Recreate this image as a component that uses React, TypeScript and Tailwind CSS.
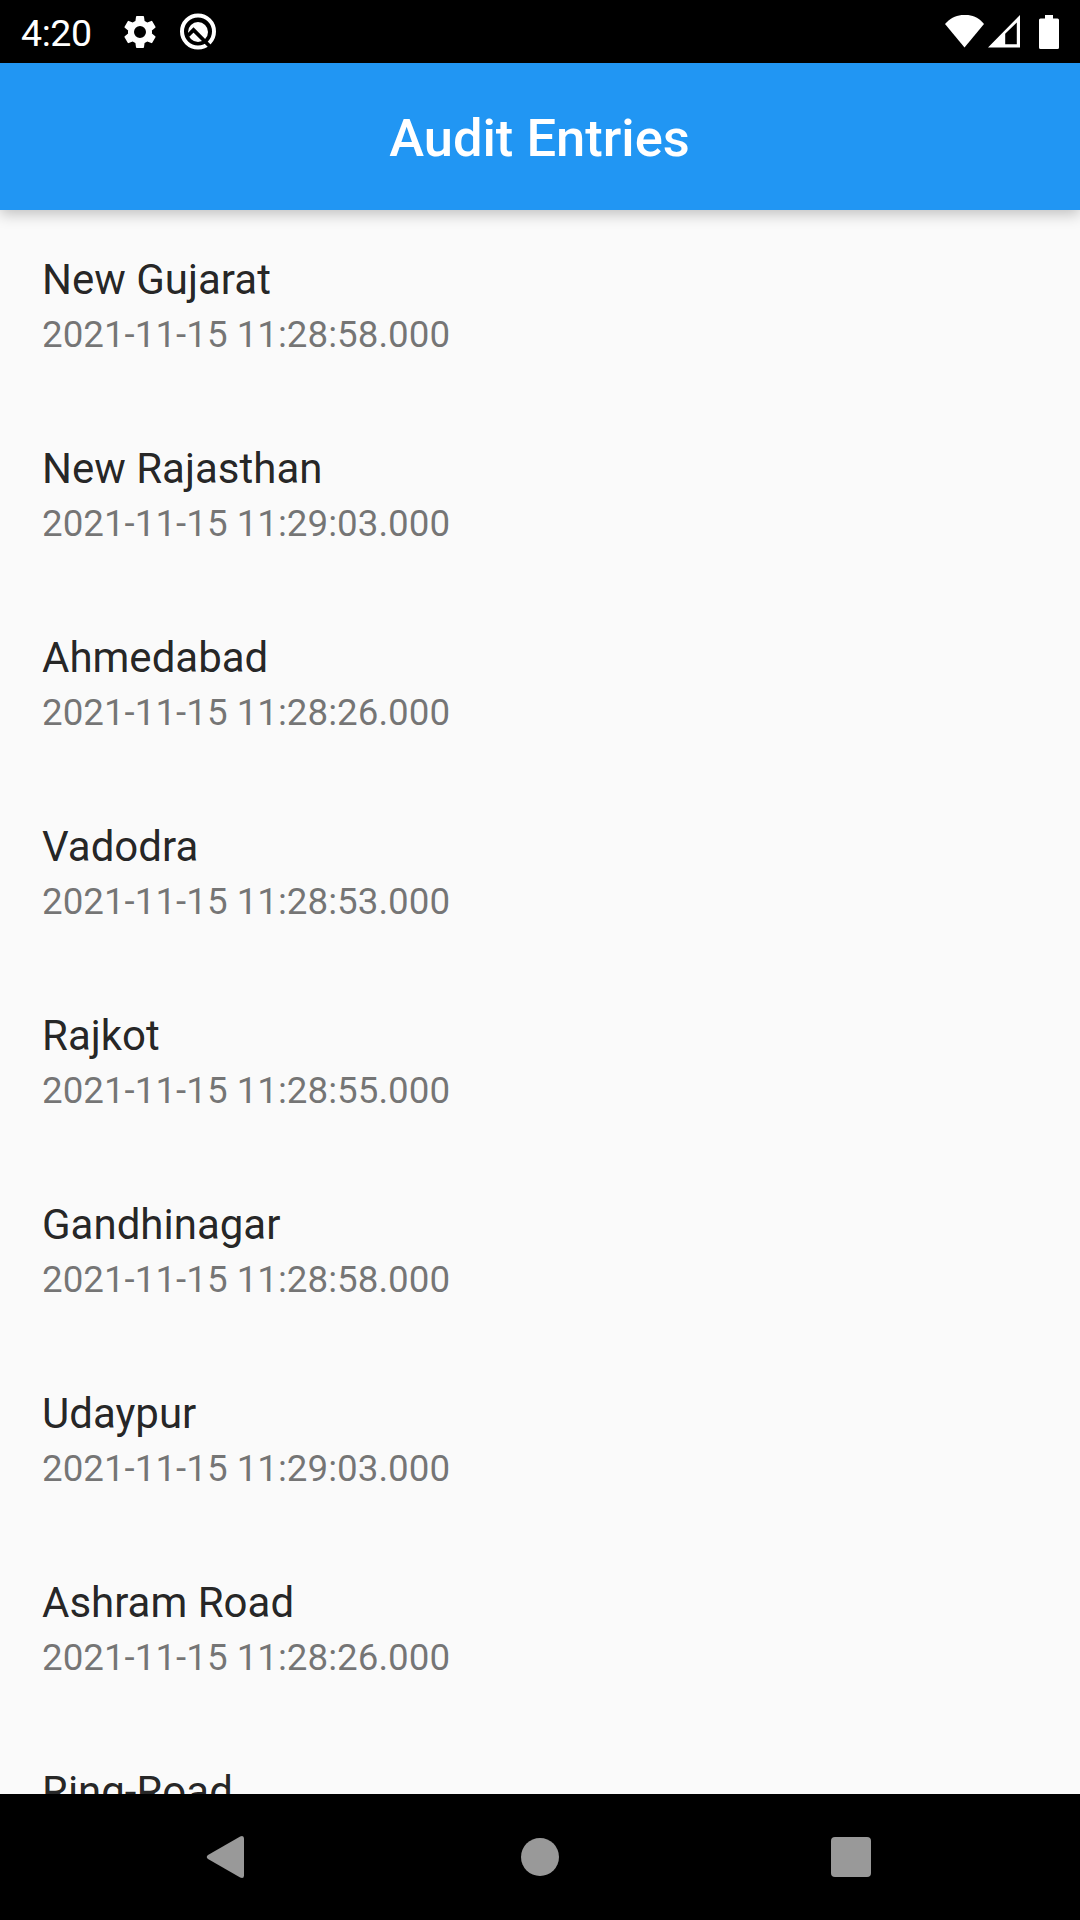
const entries = [
  ['New Gujarat', '2021-11-15 11:28:58.000'],
  ['New Rajasthan', '2021-11-15 11:29:03.000'],
  ['Ahmedabad', '2021-11-15 11:28:26.000'],
  ['Vadodra', '2021-11-15 11:28:53.000'],
  ['Rajkot', '2021-11-15 11:28:55.000'],
  ['Gandhinagar', '2021-11-15 11:28:58.000'],
  ['Udaypur', '2021-11-15 11:29:03.000'],
  ['Ashram Road', '2021-11-15 11:28:26.000'],
  ['Ring-Road', '2021-11-15 11:28:53.000'],
];

function StatusBar() {
  return (
    <div className="flex h-[63px] shrink-0 items-center justify-between bg-black pr-[21px] pl-[21px] text-white">
      <div className="flex items-center">
        <span className="w-[72px] pt-[4px] text-[37.5px] leading-none tracking-[-0.4px] whitespace-nowrap">4:20</span>
        <svg className="ml-[27px] size-[40px]" viewBox="0 0 24 24" fill="currentColor">
          <path d="M19.14 12.94c.04-.3.06-.61.06-.94s-.02-.64-.07-.94l2.03-1.58a.49.49 0 0 0 .12-.61l-1.92-3.32a.49.49 0 0 0-.59-.22l-2.39.96a7 7 0 0 0-1.62-.94l-.36-2.54a.48.48 0 0 0-.48-.41h-3.84a.47.47 0 0 0-.47.41l-.36 2.54c-.59.24-1.13.57-1.62.94l-2.39-.96a.48.48 0 0 0-.59.22L2.74 8.87a.47.47 0 0 0 .12.61l2.03 1.58c-.05.3-.09.63-.09.94s.02.64.07.94l-2.03 1.58a.49.49 0 0 0-.12.61l1.92 3.32c.12.22.37.29.59.22l2.39-.96c.5.38 1.03.7 1.62.94l.36 2.54c.05.24.24.41.48.41h3.84c.24 0 .44-.17.47-.41l.36-2.54c.59-.24 1.13-.56 1.62-.94l2.39.96c.22.08.47 0 .59-.22l1.92-3.32a.47.47 0 0 0-.12-.61zM12 15.6A3.6 3.6 0 1 1 12 8.4a3.6 3.6 0 0 1 0 7.2z" />
        </svg>
        <svg className="ml-[18px] size-[40px]" viewBox="0 0 40 40" fill="none">
          <circle cx="20" cy="19.5" r="16" stroke="white" strokeWidth="4" />
          <circle cx="20" cy="20" r="10" fill="white" />
          <path d="M10 23.5L15.5 18L32 34.5" stroke="black" strokeWidth="3.8" />
        </svg>
      </div>
      <div className="flex items-end">
        <svg className="h-[34px] w-[40px]" viewBox="0 0 40 34" fill="currentColor">
          <path d="M0 9C10.5-3.3 29.5-3.3 39 9L19.5 32.5Z" />
        </svg>
        <svg className="ml-[3px] h-[34px] w-[32px]" viewBox="0 0 32 34" fill="currentColor" fillRule="evenodd">
          <path d="M0 32.5L32 0V32.5ZM17.2 18.8V29.2H28.8V7.5Z" />
        </svg>
        <svg className="ml-[19px] h-[34px] w-[20px]" viewBox="0 0 20 34" fill="currentColor">
          <path d="M6 0H14V3.5H18.5Q20 3.5 20 5V32.5Q20 34 18.5 34H1.5Q0 34 0 32.5V5Q0 3.5 1.5 3.5H6Z" />
        </svg>
      </div>
    </div>
  );
}

function NavigationBar() {
  return (
    <nav className="flex h-[126px] shrink-0 items-center bg-black pl-[206px]">
      <svg className="h-[42px] w-[38px]" viewBox="0 0 38 42" fill="#999999">
        <path d="M34.2.4Q38-1 38 2.5V39.5Q38 43 34.2 41.6L2 23Q-.5 21 2 19Z" />
      </svg>
      <div className="ml-[277px] size-[38px] rounded-full bg-[#999999]" />
      <div className="ml-[272px] size-[40px] rounded-[4px] bg-[#999999]" />
    </nav>
  );
}

export default function App() {
  return (
    <div className="flex h-[1920px] w-[1080px] flex-col overflow-hidden bg-[#fafafa] font-['Roboto',sans-serif]">
      <StatusBar />
      <header className="z-10 flex h-[147px] shrink-0 items-center justify-center bg-[#2196f3] pt-[4px] pr-[1px] shadow-[0_4px_14px_rgba(0,0,0,0.24)]">
        <h1 className="text-[52.5px] leading-none font-medium text-white">Audit Entries</h1>
      </header>
      <main className="min-h-0 flex-1 overflow-hidden px-[42px] pt-[42px]">
        {entries.map(([name, time]) => (
          <div key={name} className="h-[189px]">
            <div className="text-[42px] leading-[56px] text-black/87">{name}</div>
            <div className="text-[36.75px] leading-[54px] text-black/54">{time}</div>
          </div>
        ))}
      </main>
      <NavigationBar />
    </div>
  );
}
